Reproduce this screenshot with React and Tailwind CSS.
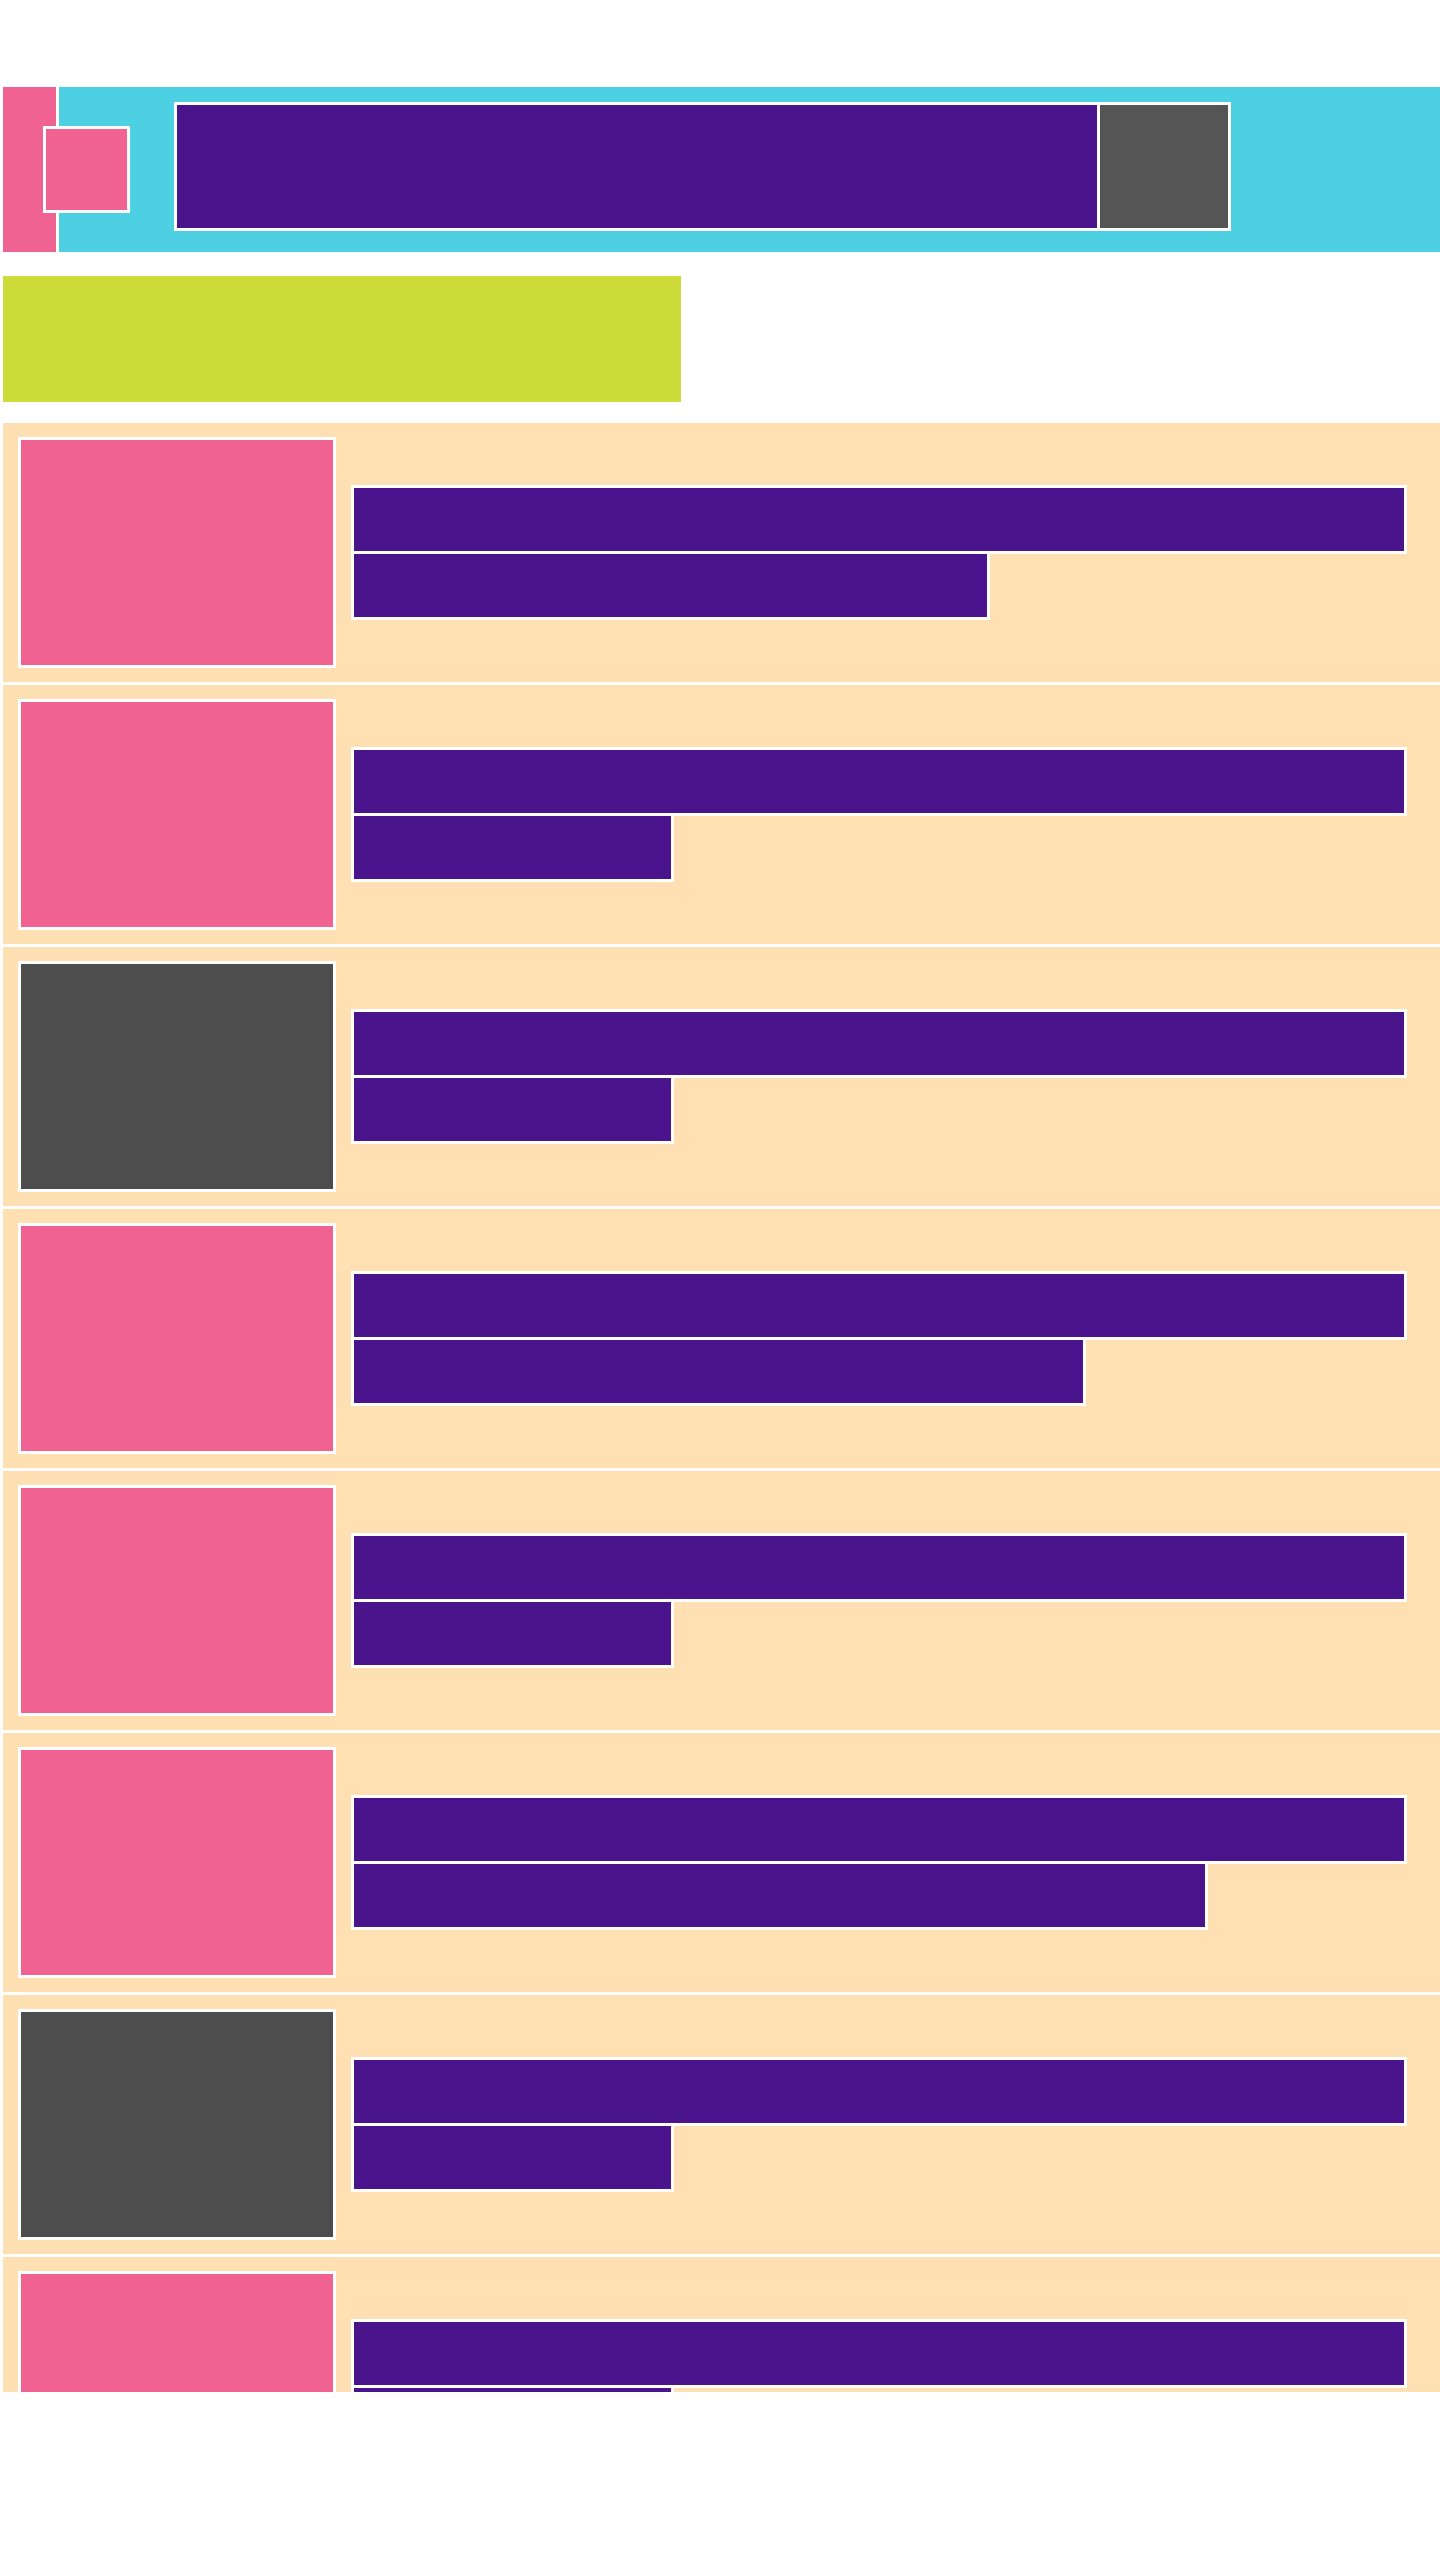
const rows = [
  { image: 'pink', second: 639 },
  { image: 'pink', second: 323 },
  { image: 'gray', second: 323 },
  { image: 'pink', second: 735 },
  { image: 'pink', second: 323 },
  { image: 'pink', second: 857 },
  { image: 'gray', second: 323 },
  { image: 'pink', second: 323 },
];

function Row({ row }) {
  return (
    <div className="flex h-[259px] shrink-0 items-center gap-[15px] bg-[#ffe0b2] pl-[15px]">
      <div
        className={
          row.image === 'gray'
            ? 'h-[231px] w-[318px] shrink-0 border-[3px] border-white bg-[#4d4d4d]'
            : 'h-[231px] w-[318px] shrink-0 border-[3px] border-white bg-[#f06292]'
        }
      />
      <div className="flex flex-col">
        <div className="h-[69px] w-[1056px] border-[3px] border-white bg-[#4a148c]" />
        <div
          className="-mt-[3px] h-[69px] border-[3px] border-white bg-[#4a148c]"
          style={{ width: row.second }}
        />
      </div>
    </div>
  );
}

export default function App() {
  return (
    <div className="min-h-[2560px] w-[1440px] overflow-hidden bg-white pl-[3px] pt-[87px]">
      {/* header */}
      <div className="relative flex h-[165px]">
        <div className="w-[53px] shrink-0 bg-[#f06292]" />
        <div className="ml-[3px] flex-1 bg-[#4dd0e1] pl-[115px] pt-[15px]">
          <div className="flex w-max gap-[3px] border-[3px] border-white bg-white">
            <div className="h-[123px] w-[920px] bg-[#4a148c]" />
            <div className="h-[123px] w-[128px] bg-[#555555]" />
          </div>
        </div>
        <div className="absolute left-[40px] top-[39px] h-[87px] w-[87px] border-[3px] border-white bg-[#f06292]" />
      </div>

      {/* banner */}
      <div className="mt-[24px] h-[126px] w-[678px] bg-[#cddc39]" />

      {/* list */}
      <div className="mt-[21px] flex h-[1969px] flex-col gap-[3px] overflow-hidden">
        {rows.map((row, index) => (
          <Row key={index} row={row} />
        ))}
      </div>
    </div>
  );
}
